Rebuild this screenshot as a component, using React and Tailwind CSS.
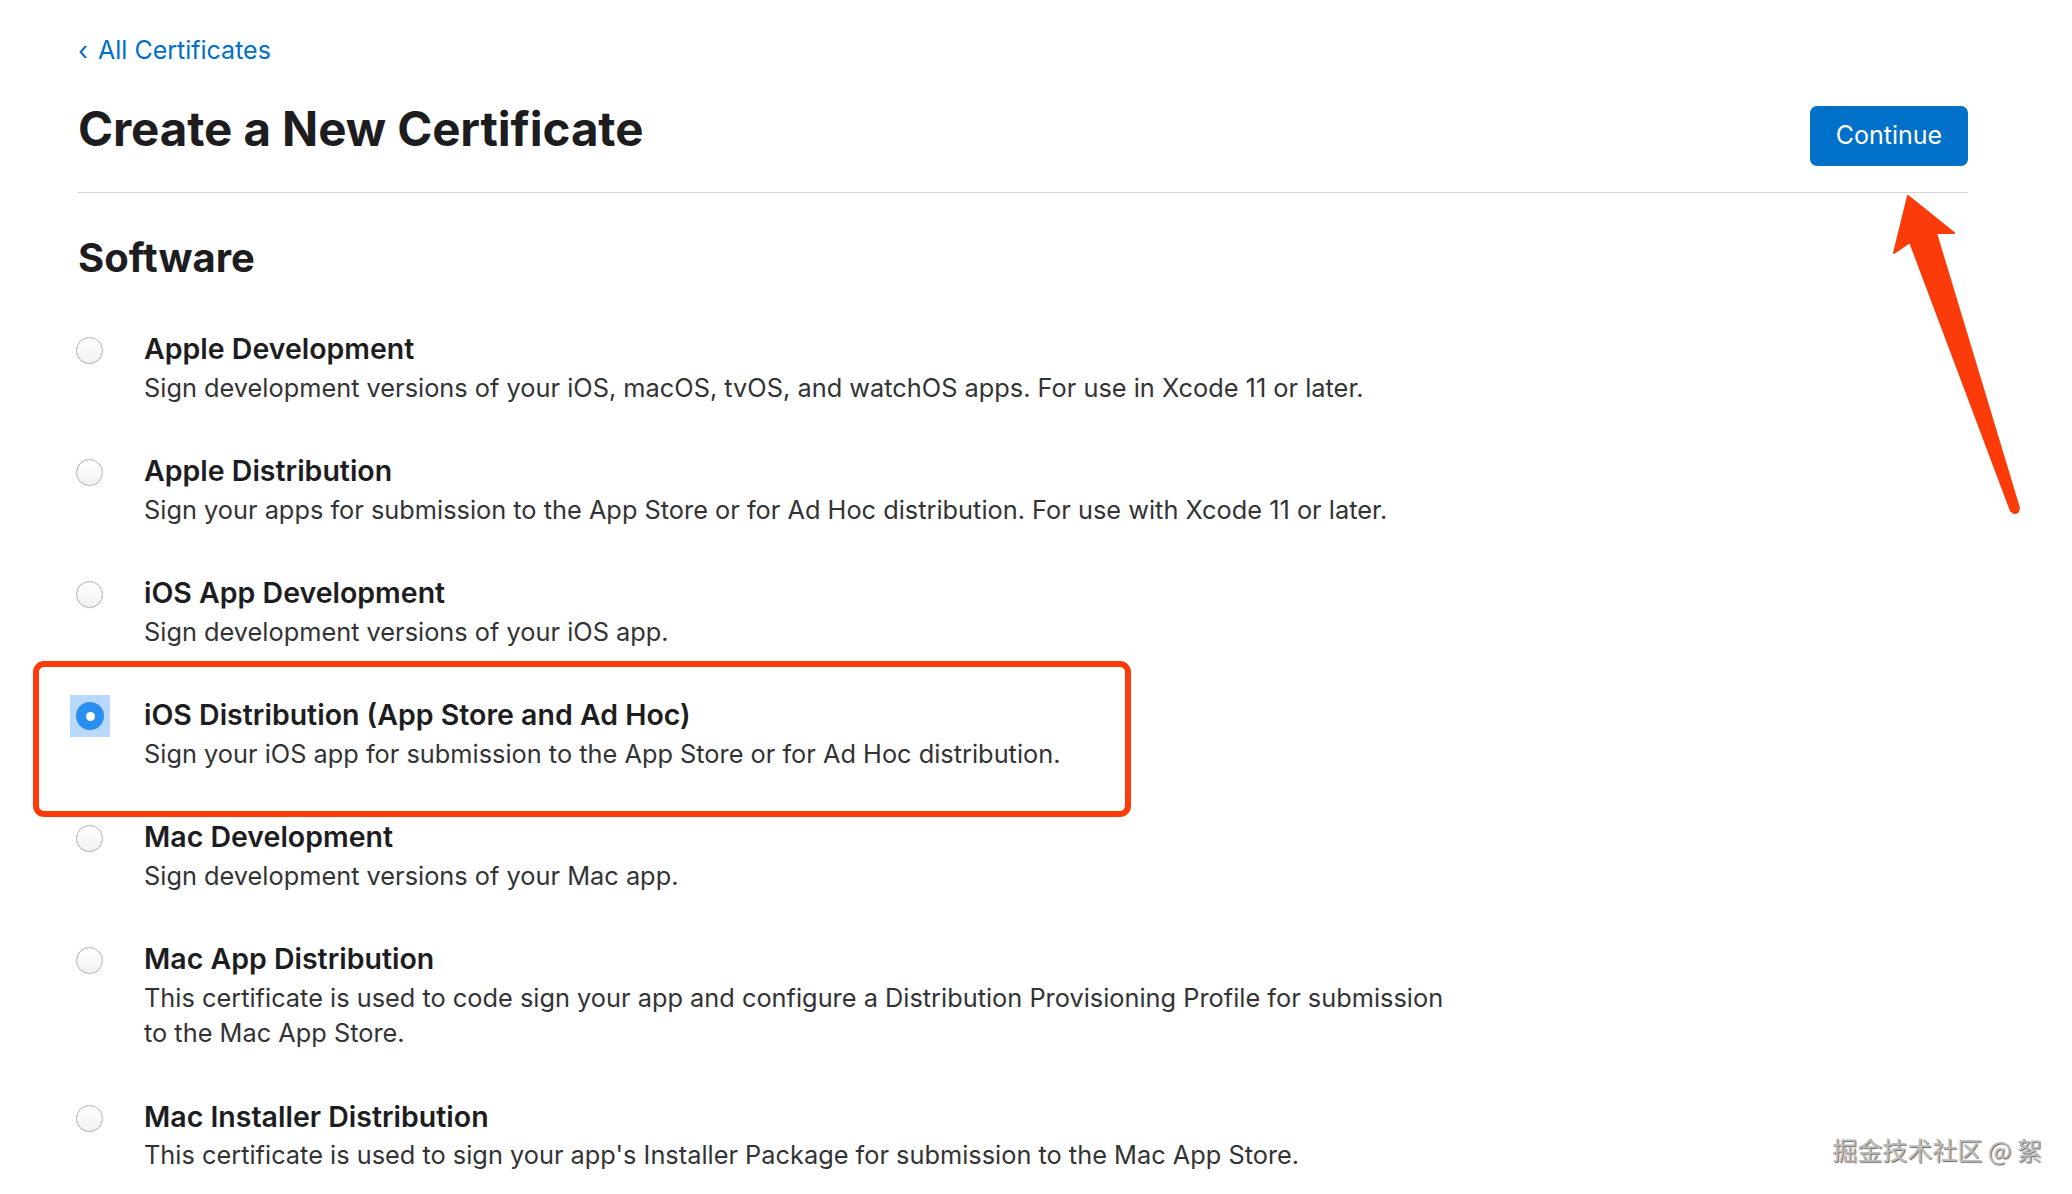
import { useState } from "react";

const certs = [
  { id: "apple-dev", title: "Apple Development", desc: ["Sign development versions of your iOS, macOS, tvOS, and watchOS apps. For use in Xcode 11 or later."] },
  { id: "apple-dist", title: "Apple Distribution", desc: ["Sign your apps for submission to the App Store or for Ad Hoc distribution. For use with Xcode 11 or later."] },
  { id: "ios-dev", title: "iOS App Development", desc: ["Sign development versions of your iOS app."] },
  { id: "ios-dist", title: "iOS Distribution (App Store and Ad Hoc)", desc: ["Sign your iOS app for submission to the App Store or for Ad Hoc distribution."] },
  { id: "mac-dev", title: "Mac Development", desc: ["Sign development versions of your Mac app."] },
  { id: "mac-app-dist", title: "Mac App Distribution", desc: ["This certificate is used to code sign your app and configure a Distribution Provisioning Profile for submission", "to the Mac App Store."] },
  { id: "mac-inst-dist", title: "Mac Installer Distribution", desc: ["This certificate is used to sign your app's Installer Package for submission to the Mac App Store."] },
];

function Radio({ checked }) {
  if (checked) {
    return (
      <div className="w-[40px] h-[42px] -ml-[8px] bg-[#b9d9fc] flex items-center justify-center">
        <div className="w-[28px] h-[28px] rounded-full bg-[#2a8ef0] flex items-center justify-center">
          <div className="w-[9px] h-[9px] rounded-full bg-white" />
        </div>
      </div>
    );
  }
  return (
    <div className="w-[27px] h-[27px] -ml-[2px] mt-[8px] rounded-full border border-[#b3b3b3] bg-gradient-to-b from-white to-[#f1f1f1] shadow-[0_0.5px_1px_rgba(0,0,0,0.08)]" />
  );
}

export default function App() {
  const [selected, setSelected] = useState("ios-dist");

  return (
    <div className="relative min-h-[1194px] bg-white overflow-hidden font-['Inter',sans-serif] text-[#1d1d1f]">
      <div className="pl-[78px] pr-[104px] pt-[32px]">
        <a href="#" className="flex items-center gap-[10px] text-[25px] leading-[37px] text-[#0070c9]">
          <span className="text-[26px]">‹</span>
          <span>All Certificates</span>
        </a>

        <div className="mt-[33px] flex items-start justify-between border-b border-[#d6d6d6] pb-[26px]">
          <h1 className="text-[47.5px] leading-[53px] font-bold tracking-[-0.1px]">Create a New Certificate</h1>
          <button className="mt-[4px] h-[60px] w-[158px] rounded-[7px] bg-[#0070c9] text-white text-[25px]">
            Continue
          </button>
        </div>

        <h2 className="mt-[41px] text-[40px] leading-[48px] font-bold">Software</h2>

        <div className="mt-[47px] flex flex-col gap-[46px]">
          {certs.map((c) => (
            <div key={c.id} className="relative flex" onClick={() => setSelected(c.id)}>
              <div className="w-[66px] shrink-0">
                <Radio checked={selected === c.id} />
              </div>
              <div>
                <div className="text-[28.5px] leading-[40.5px] font-semibold">{c.title}</div>
                {c.desc.map((line) => (
                  <div key={line} className="text-[25.35px] leading-[35.5px] text-[#333336]">{line}</div>
                ))}
              </div>
              {c.id === "ios-dist" && (
                <div className="absolute -top-[34px] -left-[45px] w-[1098px] h-[156px] rounded-[11px] border-[6px] border-[#fb3b0a] pointer-events-none" />
              )}
            </div>
          ))}
        </div>
      </div>

      <svg className="absolute left-[1880px] top-[190px] w-[160px] h-[330px] pointer-events-none" viewBox="0 0 160 330">
        <polygon points="28,6 74,43 56,43 139,318 131,321 30,52 14,63" fill="#fb3b0a" stroke="#fb3b0a" strokeWidth="2" strokeLinejoin="round" />
        <circle cx="135" cy="319.5" r="4.5" fill="#fb3b0a" />
      </svg>

      <div className="absolute right-[30px] top-[1132px] font-['Noto_Sans_CJK_SC',sans-serif] text-[25px] leading-[34px] text-[#bdbdbd] [text-shadow:1px_1px_1px_#666666,-1px_-1px_0_#ffffff]">
        掘金技术社区 @ 絮
      </div>
    </div>
  );
}
